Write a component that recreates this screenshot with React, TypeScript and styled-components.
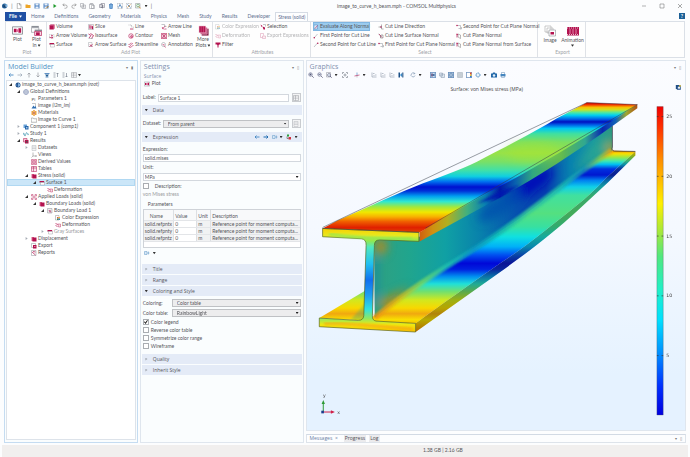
import React from 'react';
import styled, { createGlobalStyle, css } from 'styled-components';

const Global = createGlobalStyle`
  * { box-sizing: border-box; }
  body { margin: 0; background: #fdfdfe; }
  body, button, input, select, table {
    font-family: Lato, "Open Sans", sans-serif;
    font-size: 5px;
    line-height: 7px;
    color: #55555a;
  }
  button { border: 0; background: none; padding: 0; margin: 0; }
  h2, p, ul { margin: 0; padding: 0; list-style: none; font-weight: 400; }
`;

/* ---------- icons ---------- */

const M = '#b3124f';
const B = '#2f6fb3';
const G = '#8b8f96';

const glyphs: Record<string, React.ReactNode> = {
  app: <><circle cx="5" cy="6" r="5" fill="#1f5c94" /><path d="M5 3h6v5H5z" fill="#7fb2dd" /><path d="M3 4l4 1v4l-4-1z" fill="#173f6b" /></>,
  newFile: <path d="M2.500.5h5l2.500 3v8h-7.500zM7 .5v3.500h3" fill="#fff" stroke="#777" />,
  open: <path d="M1 3h4l1 1h5v6H1z" fill="#eda528" />,
  save: <><path d="M1 1h10v10H1z" fill="#4a7fbf" /><path d="M3 1h6v4H3zM3 7h6v4H3z" fill="#e8f0fa" /></>,
  saveAs: <><path d="M1 1h10v10H1z" fill="#4a7fbf" /><path d="M3 1h6v4H3zM3 7h5v4H3z" fill="#e8f0fa" /><path d="M6 11l5-5" stroke="#c98a2a" strokeWidth="2" /></>,
  run: <path d="M3 2l6 4-6 4z" fill="#1f9a2c" />,
  undo: <path d="M4 1L1.500 4 5 6M2 4h5a3 3 0 010 6.500H5" fill="none" stroke="#888" strokeWidth="1.300" />,
  redo: <path d="M8 1l2.500 3L7 6m3-2H5a3 3 0 000 6.500h2" fill="none" stroke="#888" strokeWidth="1.300" />,
  copy: <path d="M1 1h6v7H1zM4 4h7v7H4zM6 6h3M6 8.500h3" fill="#fff" stroke={G} />,
  paste: <path d="M1 2h8v9H1zM3 1h4v2H3zM5 5h6v6H5z" fill="#fff" stroke={G} />,
  dup: <path d="M1 3h6v6H1zM4 1h7v8H4zM5 6h5M7 4v7" fill="#fff" stroke="#667" />,
  trash: <path d="M2 3h8M4 1.500h4M3 3l.5 8h5L9 3" fill="#78aee0" stroke={B} strokeWidth="1.200" />,
  selBox: <><path d="M1 1h10v10H1z" fill="none" stroke={G} strokeDasharray="2 1" /><path d="M3 9l3-6 4 7" fill="none" stroke={B} strokeWidth="1.500" /></>,
  selX: <><path d="M1 1h10v10H1z" fill="none" stroke={G} strokeDasharray="2 1" /><path d="M3 3l6 6" stroke={B} strokeWidth="1.500" /><path d="M9 3L3 9" stroke="#d98a2b" strokeWidth="1.500" /></>,
  find: <><path d="M1 1h9v9H1z" fill="#e7f2e5" stroke={G} /><circle cx="6" cy="5" r="2.500" fill="#fff" stroke="#3d8b47" /><path d="M8 7l3 4" stroke="#d98a2b" strokeWidth="1.500" /></>,
  plot: <><path d="M.5 2h11v8H.5z" fill="#fff" stroke={G} /><path d="M2 4h3v4H2zM7 3.500h3v5H7z" fill={M} /><circle cx="6" cy="6" r="1.500" fill="#e46a96" /></>,
  plotIn: <><path d="M.5 1h8v2h-8z" fill={G} /><path d="M.5 3h8v5h-8z" fill="#fff" stroke={G} strokeWidth=".7" /><path d="M4 5h8v2H4z" fill={G} /><path d="M4 7h7.500v4.500H4z" fill="#f6dbe5" stroke={M} strokeWidth=".7" /><path d="M5.500 8h4v3h-4z" fill={M} /></>,
  volume: <><path d="M1 3l2-2h8v8l-2 2H1z" fill={M} /><path d="M1 3h8v8M9 3l2-2" fill="none" stroke="#e79ab7" strokeWidth=".7" /></>,
  more: <><path d="M4 4h7.500v7.500H4z" fill="#7e0d39" /><path d="M2.500 2.500H10V10H2.500z" fill="#c53b70" stroke="#fff" strokeWidth=".5" /><path d="M1 1h7.500v7.500H1z" fill={M} stroke="#fff" strokeWidth=".5" /><path d="M3.500 1v7.500M6 1v7.500" stroke="#e58baa" strokeWidth=".4" /></>,
  arrowVol: <><path d="M1 3h9v7H1z" fill="none" stroke={G} strokeWidth=".8" strokeDasharray="2 1" /><path d="M1 9h6M5 7l3 2-3 2M4 5h4" fill="none" stroke={M} strokeWidth="1.300" /></>,
  surface: <><path d="M1 2h9l1 3H1z" fill={M} /><path d="M1 5h10v5H3V5" fill="#fff" stroke={G} strokeWidth=".8" /></>,
  slice: <><path d="M1 1h10v10H1z" fill="#f4e4ea" stroke={G} strokeWidth=".8" /><path d="M3 2l2 1v7L3 9zM7 3l3 2v6L7 9z" fill={M} /></>,
  iso: <><path d="M1 2l5 3-4 5M5 1l6 4-4 6" fill="none" stroke={M} strokeWidth="1.500" /><path d="M1 11h9" stroke={G} /></>,
  arrowSurf: <><path d="M1 1h7v8H1z" fill="none" stroke={G} strokeWidth=".8" /><path d="M3 9l6-4M4 5l5 5" stroke={M} strokeWidth="1.400" /></>,
  line: <><path d="M1 2h6v4h4v5" fill="none" stroke={G} strokeDasharray="2 1" /><path d="M4 10h6" stroke={M} strokeWidth="1.500" /></>,
  contour: <><circle cx="6" cy="6" r="4.500" fill="none" stroke={M} strokeWidth="1.200" /><circle cx="7" cy="7" r="2" fill="#e07da0" stroke={M} /></>,
  stream: <path d="M1 9c4 2 4-6 9-6M1 5c3 1 3-3 6-3M3 11c4 0 5-4 8-4" fill="none" stroke={M} strokeWidth="1.200" />,
  arrowLine: <><path d="M1 1h6v4h4" fill="none" stroke={G} /><path d="M2 10l7-6M2 6l4 5M7 10h4" stroke={M} strokeWidth="1.200" /></>,
  mesh: <><path d="M1 1h10v10H1z" fill="#f1ccd9" stroke={M} /><path d="M1 1l10 10M11 1L1 11M6 1v10" stroke={M} /></>,
  annot: <><circle cx="5" cy="5" r="4" fill="#fff" stroke={G} /><path d="M5 7l5 4M3 5h4" stroke={M} /></>,
  colorExp: <><path d="M1 1h7v9H1z" fill="#fff" stroke={G} /><path d="M4 4h3v3H4z" fill="#e3564d" /><path d="M7 4h3v3H7z" fill="#f0c230" /><path d="M4 7h3v3H4z" fill="#3a8f4a" /><path d="M7 7h3v3H7z" fill="#3a79c4" /></>,
  deform: <><path d="M1 3l5 2M1 7l4 2" stroke={M} strokeWidth="1.300" /><path d="M6 4h5v6H7z" fill="#f6dfe7" stroke={M} strokeWidth=".8" /></>,
  filter: <path d="M1 1h10v4H8l-1 2v4H5V7L4 5H1z" fill={M} />,
  selection: <><path d="M1 1l4 3-2 2zM5 5l5 2v4H7z" fill={M} /><path d="M6 1h5v4" fill="none" stroke={G} /></>,
  exportExp: <path d="M1 1h6v4M1 1v8h4M5 6h6v5H5zM7 8h2" fill="none" stroke={M} />,
  evalN: <><path d="M2 2h7v8H2z" fill="#dcecf8" stroke={B} strokeWidth=".8" /><path d="M4 9l5-6" stroke={M} strokeWidth="1.200" /></>,
  firstPt: <><path d="M2 10l7-8" stroke={G} /><circle cx="2.500" cy="9.500" r="1.500" fill={M} /></>,
  secondPt: <><path d="M2 10l7-8" stroke={G} /><circle cx="9.500" cy="2.500" r="1.500" fill={M} /></>,
  cutDir: <><path d="M1 6h6M7 1v9h4" fill="none" stroke="#666" /><path d="M5 4l3 2-3 2z" fill={M} /></>,
  cutSurf: <><path d="M1 2l4 3v4M6 4h4v6H5z" fill="none" stroke="#666" /><path d="M2 2l6 7" stroke={M} strokeWidth="1.200" /></>,
  planePt: <><path d="M2 3h7v6H5M8 10h3V6" fill="none" stroke={G} /><circle cx="2" cy="3" r="1.500" fill={M} /></>,
  cutPlane: <><path d="M4 2l5 2v7L4 8z" fill="none" stroke="#777" /><path d="M1 3h3M2 1v8" stroke={M} strokeWidth="1.400" /></>,
  image: <><path d="M1 1h6v6H1zM3 3h6v5H3z" fill="#fff" stroke="#aaa" strokeWidth=".6" /><path d="M5 5h6.500v6H5z" fill="#fff" stroke={G} strokeWidth=".6" /><path d="M6.500 7h3.500v2.500H6.500z" fill={M} /></>,
  anim: <><path d="M0 2h12v8.500H0z" fill={M} /><path d="M0 3h12M0 9.500h12" stroke="#fff" strokeWidth=".7" strokeDasharray="1 1" /><path d="M3 4v5M6 4v5M9 4v5" stroke="#f0bccd" strokeWidth=".7" /></>,
  left: <path d="M11 6H2M5 3L2 6l3 3" fill="none" stroke="#4387c2" strokeWidth="1.800" />,
  right: <path d="M1 6h9M7 3l3 3-3 3" fill="none" stroke="#9aa7b5" strokeWidth="1.500" />,
  rightBlue: <path d="M1 6h9M7 3l3 3-3 3" fill="none" stroke="#1d6bb0" strokeWidth="2" />,
  up: <path d="M6 11V2M3 5l3-3 3 3" fill="none" stroke={G} strokeWidth="1.300" />,
  down: <path d="M6 1v9M3 7l3 3 3-3" fill="none" stroke={G} strokeWidth="1.300" />,
  eye: <><path d="M1 3h10M3 10h6" stroke={B} strokeWidth="1.500" /><path d="M2 5h8l-4 5z" fill="#1f5c94" /></>,
  collapse: <path d="M1 2h4M1 6h4M1 10h4M9 10V2M7 4l2-2 2 2" fill="none" stroke="#6c7683" strokeWidth="1.200" />,
  expand: <path d="M1 2h4M1 6h4M1 10h4M9 2v8M7 8l2 2 2-2" fill="none" stroke="#6c7683" strokeWidth="1.200" />,
  table: <path d="M1 1h10v10H1zM1 4h10M1 7.500h10M5 1v10" fill="#fff" stroke={G} strokeWidth=".9" />,
  globe: <><circle cx="6" cy="6" r="5" fill="#e6ebf5" stroke="#6f7fa5" /><path d="M1 6h10M6 1c-3 3-3 7 0 10M6 1c3 3 3 7 0 10" fill="none" stroke="#6f7fa5" strokeWidth=".8" /></>,
  root: <><circle cx="6" cy="6" r="5" fill="#1f4f8a" /><path d="M6 2l4 2v4l-4 2z" fill="#82b0dc" /><path d="M2 4l3 1v4L2 8z" fill="#3c6fae" /></>,
  pi: <text x="1" y="9" fontSize="9" fill="#555">Pi</text>,
  picture: <><path d="M2 1h7v8" fill="none" stroke={G} /><path d="M1 11l4-6 2 3 2-2 2 5z" fill={B} /></>,
  materials: <><circle cx="6" cy="6" r="1.800" fill="#b5482b" /><g fill="#e8962a"><circle cx="6" cy="2" r="1.800" /><circle cx="9.500" cy="4" r="1.800" /><circle cx="9.500" cy="8" r="1.800" /><circle cx="6" cy="10" r="1.800" /><circle cx="2.500" cy="8" r="1.800" /><circle cx="2.500" cy="4" r="1.800" /></g></>,
  folder: <path d="M.5 2h4l1 1.500h6v7H.5z" fill="#fff" stroke="#777" />,
  component: <><path d="M1 1h7v7H1z" fill="#6aa3d8" /><path d="M4 4h7v7H4z" fill="#2765a8" /><path d="M6 6h3v3H6z" fill="#9fc6ea" /></>,
  study: <path d="M0 8c1-5 2-5 3 0s2 0 3-3 2-2 3 1 2 1 3-1" fill="none" stroke="#2c8ba8" strokeWidth="1.300" />,
  results: <><path d="M1 1h7v7H1z" fill="#f0c6d5" stroke={M} /><path d="M4 4h7v7H4z" fill={M} /><path d="M6 6h3v3H6z" fill="#555" /></>,
  datasets: <path d="M2 1h8v10H2zM2 4h8M2 7h8" fill="#f3f3f5" stroke="#b5b8bd" />,
  views: <path d="M4 1v7h7M4 8l-3 3M9 6l2 2-2 2" fill="none" stroke="#777" />,
  derived: <path d="M1 1h4v4H1zM7 1h4v4H7zM1 7h4v4H1zM7 7h4v4H7z" fill="#e7a3bb" stroke={M} strokeWidth=".8" />,
  tables: <><path d="M1 1h10v10H1z" fill="#f7e3ea" stroke={M} /><path d="M1 4h10M5 1v10" stroke={M} /></>,
  group: <><path d="M1 2h5v8H1z" fill="#d8628d" /><path d="M3 3h8v8H3z" fill={M} /></>,
  loads: <path d="M1 1h3v3H1zM8 1h3v3H8zM1 8h3v3H1zM8 8h3v3H8zM5 5h2v2H5z" fill="none" stroke={M} strokeWidth=".9" />,
  bload: <><path d="M1 1h9v9H1z" fill="#eee" stroke={G} /><path d="M3 4h4l2 5H5z" fill="#c4799a" /></>,
  export: <><path d="M1 1h8v8H1z" fill="#fff" stroke={G} /><path d="M4 4h7v7H4z" fill={M} /><path d="M6 7h3" stroke="#fff" /></>,
  reports: <><path d="M1 1h9v10H1z" fill="#fff" stroke={G} /><path d="M2 4l7 6M4 3l5 1" stroke={M} strokeWidth="1.400" /></>,
  zoomIn: <><circle cx="5" cy="5" r="3.500" fill="#e7f0fa" stroke="#446" /><path d="M8 8l3.500 3.500M3 5h4M5 3v4" stroke="#446" strokeWidth="1.300" /></>,
  zoomOut: <><circle cx="5" cy="5" r="3.500" fill="#e7f0fa" stroke="#446" /><path d="M8 8l3.500 3.500M3 5h4" stroke="#446" strokeWidth="1.300" /></>,
  zoomBox: <><path d="M1 1h8v9H1z" fill="none" stroke={G} /><circle cx="6" cy="6" r="3" fill="#e7f0fa" stroke="#446" /><path d="M8 8l3.500 3.500" stroke="#446" strokeWidth="1.300" /></>,
  extents: <path d="M1 4V1h3M8 1h3v3M11 8v3H8M4 11H1V8M6 3v6M3 6h6" fill="none" stroke="#6e7580" strokeWidth="1.200" />,
  axes: <><path d="M6 1v6" stroke="#4a86c5" strokeWidth="1.300" /><path d="M6 7l5-1M6 7l-5 1" stroke={M} strokeWidth="1.200" /><path d="M6 7v4" stroke="#888" /></>,
  xy: <path d="M2 1v9h9M4 3h3M8 6h3M5 7h2" fill="none" stroke="#8a96a6" strokeWidth="1.200" />,
  camera2: <><path d="M1 1h3v10H1z" fill="#1a4f86" /><path d="M4 6l4-4v8z" fill="#3d8dc9" /><path d="M8 1h3v10H8z" fill="#5b7ea5" /></>,
  rotate: <path d="M9 3a4 4 0 10 1 4M8 1l2 2-3 1" fill="none" stroke="#7a93b0" strokeWidth="1.300" />,
  light: <><path d="M.5.5h11v11H.5z" fill="#cfe3f6" stroke="#3d6ea8" strokeWidth="1.500" /><path d="M2 3h4v6H2z" fill="#7b6f96" /><path d="M5 6l4-3v6z" fill="#1c4e86" /></>,
  transp: <path d="M1 2h6v6H1zM4 4h7v7H4z" fill="#dfe9f2" stroke="#8193a8" />,
  wire: <><path d="M.5.5h11v11H.5z" fill="#e4eff9" stroke="#2a5f9e" strokeWidth="1.500" /><path d="M1 6h10M6 1v10M3 3h6v6H3z" fill="none" stroke="#4472a5" /></>,
  grid: <path d="M1 1h10v10H1zM1 4h10M1 8h10M4 1v10M8 1v10" fill="#e9edf1" stroke="#9aa6b3" />,
  legend: <><path d="M.5.5h11v11H.5z" fill="#fff" stroke="#3d6ea8" strokeWidth="1.500" /><path d="M8 1h3v4H8z" fill="#e24a2e" /><path d="M8 5h3v3H8z" fill="#e9c22c" /><path d="M8 8h3v3H8z" fill="#3177d0" /></>,
  ring: <circle cx="6" cy="6" r="4" fill="#e8f2fb" stroke="#3d7fb8" strokeWidth="1.800" strokeDasharray="3 1" />,
  photo: <><path d="M0 3h3l1-2h4l1 2h3v8H0z" fill="#2167a8" /><circle cx="6" cy="7" r="2.500" fill="#e6f1fb" /></>,
  print: <><path d="M3 1h6v4H3z" fill="#fff" stroke="#5c86b0" /><path d="M1 4h10v5H1z" fill="#4486c0" /><path d="M3 8h6v3H3z" fill="#dbe9f5" stroke="#5c86b0" strokeWidth=".8" /></>,
  insert: <path d="M1 3h5v6H1zM6 6h5M9 3v6" fill="#d8e8f6" stroke="#5b94c6" />,
  unitSet: <><path d="M2 1h4v4H2z" fill="#2a9f3c" /><path d="M5 6h5v5H5z" fill="#d1303e" /><path d="M2 5v4h3" stroke="#333" fill="none" /></>,
};

const Svg = styled.svg<{ $size: number }>`
  display: block;
  flex: none;
  width: ${p => p.$size}px;
  height: ${p => p.$size}px;
`;
const Icon = ({ name, size = 6 }: { name: string; size?: number }) => (
  <Svg $size={size} viewBox="0 0 12 12" aria-hidden="true">{glyphs[name]}</Svg>
);

const Caret = styled.span<{ $dir?: 'down' | 'right' | 'open' }>`
  flex: none;
  width: 3px;
  height: 3px;
  background: #333;
  clip-path: polygon(0 20%, 100% 20%, 50% 90%);
  ${p => p.$dir === 'right' && css`background: #a5abb3; clip-path: polygon(20% 0, 90% 50%, 20% 100%);`}
  ${p => p.$dir === 'open' && css`clip-path: polygon(100% 0, 100% 100%, 0 100%);`}
`;

/* ---------- shell ---------- */

const Shell = styled.div`
  display: flex;
  flex-direction: column;
  min-height: 100vh;
  background: #fcfdfe;
`;
const TitleBar = styled.header`
  display: flex;
  align-items: center;
  height: 12px;
  padding: 0 7px 0 2px;
`;
const QuickBar = styled.div`
  display: flex;
  align-items: center;
  justify-content: space-between;
  width: 150px;
`;
const DocTitle = styled.div`
  flex: 1;
  text-align: center;
`;
const WindowButtons = styled.div`
  display: flex;
  gap: 12px;
`;
const IconButton = styled.button<{ $w?: number }>`
  display: flex;
  align-items: center;
  justify-content: center;
  flex: none;
  min-width: ${p => p.$w ?? 6}px;
  height: 7px;
`;

const Tabs = styled.nav`
  display: flex;
  align-items: stretch;
  height: 9px;
  padding: 0 5px;
`;
const TabButton = styled.button<{ $kind?: 'file' | 'active' }>`
  display: flex;
  align-items: center;
  padding: 0 5px;
  color: #5f7090;
  ${p => p.$kind === 'file' && css`background: #1f4fa3; color: #fff; font-weight: 700; gap: 2px; padding: 0 4px;
    ${Caret} { background: #fff; }`}
  ${p => p.$kind === 'active' && css`border: 1px solid #d5dbe4; border-bottom: 0; padding: 0 2px; background: #fdfeff;`}
`;
const Help = styled.button`
  width: 6px;
  height: 6px;
  margin: 1px 0 0 auto;
  background: #1c6096;
  color: #fff;
  font-weight: 700;
  line-height: 6px;
`;

const Ribbon = styled.section`
  display: flex;
  margin: 0 5px 2px;
  border: 1px solid #dbe0e7;
  background: #fefefe;
`;
const RibbonGroup = styled.div<{ $cols: string }>`
  display: grid;
  grid-template-columns: ${p => p.$cols};
  grid-template-rows: repeat(3, 9px) 6px;
  grid-auto-flow: column;
  padding: 0 0 2px 2px;
  border-right: 1px solid #dfe2e7;
`;
const GroupLabel = styled.span`
  grid-row: 4;
  grid-column: 1 / -1;
  text-align: center;
  line-height: 6px;
  color: #a0a3a8;
`;
const Command = styled.button<{ $on?: boolean; $off?: boolean }>`
  display: flex;
  align-items: center;
  justify-self: start;
  gap: 1px;
  white-space: nowrap;
  ${p => p.$on && css`background: #9bcbee; outline: 1px solid #7fb6e2; outline-offset: -1px;`}
  ${p => p.$off && css`opacity: 0.45;`}
`;
const BigCommand = styled.button`
  grid-row: 1 / 4;
  display: flex;
  flex-direction: column;
  align-items: center;
  justify-content: flex-start;
  gap: 1px;
  padding-top: 3px;
  line-height: 5px;
`;
const Inline = styled.span`
  display: flex;
  align-items: center;
  gap: 1px;
`;

const Workspace = styled.main`
  flex: 1;
  display: grid;
  grid-template-columns: minmax(120px, 134fr) minmax(150px, 164fr) minmax(300px, 381fr);
  gap: 2px;
  padding: 0 4px 0 4px;
`;
const Panel = styled.section<{ $blue?: boolean }>`
  display: flex;
  flex-direction: column;
  min-width: 0;
  border: 1px solid ${p => (p.$blue ? '#c5dcf1' : '#dfe6ee')};
  background: #fafdfe;
`;
const PanelHead = styled.div`
  display: flex;
  align-items: center;
  padding: 1px 4px 0 3px;
`;
const PanelTitle = styled.h2<{ $blue?: boolean }>`
  flex: 1;
  font: 7px/10px "Open Sans", sans-serif;
  color: ${p => (p.$blue ? '#4f92c4' : '#8190ae')};
`;
const Corner = styled.button`
  display: flex;
  gap: 3px;
  font-size: 4px;
  color: #777;
`;
const Tools = styled.div`
  display: flex;
  align-items: center;
  height: 8px;
  padding-bottom: 2px;
`;
const ToolGroup = styled.div<{ $gap: number }>`
  display: flex;
  align-items: center;
  margin-left: ${p => p.$gap}px;
`;

/* ---------- tree ---------- */

const Tree = styled.ul`
  flex: 1;
  margin: 0 1px 2px;
  border: 1px solid #dde3ea;
  background: #fff;
`;
const TreeRow = styled.li<{ $level: number; $on?: boolean; $muted?: boolean }>`
  display: grid;
  grid-template-columns: 6px 7px auto;
  align-items: center;
  justify-content: start;
  height: 7px;
  padding-left: ${p => 2 + p.$level * 8}px;
  white-space: nowrap;
  ${p => p.$on && css`background: #cbe6f8; box-shadow: inset 0 0 0 1px #b0d8f2;`}
  ${p => p.$muted && css`color: #96989c;`}
`;

type Node = [number, string, string, string?, ('open' | 'right')?];
const nodes: Node[] = [
  [0, 'root', 'image_to_curve_h_beam.mph', '(root)', 'open'],
  [1, 'globe', 'Global Definitions', '', 'open'],
  [2, 'pi', 'Parameters 1'],
  [2, 'picture', 'image', '(i2m_im)'],
  [2, 'materials', 'Materials'],
  [2, 'folder', 'Image to Curve 1'],
  [1, 'component', 'Component 1', '(comp1)', 'right'],
  [1, 'study', 'Study 1', '', 'right'],
  [1, 'results', 'Results', '', 'open'],
  [2, 'datasets', 'Datasets', '', 'right'],
  [2, 'views', 'Views'],
  [2, 'derived', 'Derived Values'],
  [2, 'tables', 'Tables'],
  [2, 'group', 'Stress (solid)', '', 'open'],
  [3, 'surface', 'Surface 1', '', 'open'],
  [4, 'deform', 'Deformation'],
  [2, 'loads', 'Applied Loads (solid)', '', 'open'],
  [3, 'group', 'Boundary Loads (solid)', '', 'open'],
  [4, 'bload', 'Boundary Load 1', '', 'open'],
  [5, 'colorExp', 'Color Expression'],
  [5, 'deform', 'Deformation'],
  [4, 'surface', 'Gray Surfaces', '', 'right'],
  [2, 'group', 'Displacement', '', 'right'],
  [2, 'export', 'Export'],
  [2, 'reports', 'Reports'],
];

/* ---------- settings ---------- */

const Subtitle = styled.p`
  padding-left: 3px;
  font: 5px/8px "Open Sans", sans-serif;
  color: #8190ae;
`;
const PlotButton = styled.button`
  display: flex;
  align-items: center;
  align-self: flex-start;
  gap: 2px;
  margin: 0 0 6px 3px;
`;
const Section = styled.button`
  display: flex;
  align-items: center;
  gap: 5px;
  height: 10px;
  flex: none;
  margin: 0 1px 1px 1px;
  padding: 0 3px;
  background: #e4ebf7;
  font: 5px/10px "Open Sans", sans-serif;
  text-align: left;
`;
const SectionBar = styled.div`
  display: flex;
  flex: none;
  background: #e4ebf7;
  margin: 0 1px 1px 1px;
  padding-right: 4px;
  align-items: center;
  ${Section} { flex: 1; margin: 0; }
`;
const Field = styled.div<{ $label: number; $gap?: number }>`
  display: grid;
  grid-template-columns: ${p => p.$label}px minmax(0, 1fr) auto;
  align-items: center;
  padding: 0 2px;
  margin-bottom: ${p => p.$gap ?? 3}px;
`;
const TextInput = styled.input`
  min-width: 0;
  width: 100%;
  height: 8px;
  padding: 0 1px;
  border: 1px solid #d3d8de;
  background: #fff;
`;
const SelectBox = styled.span`
  position: relative;
  display: block;
  &::after {
    content: '';
    position: absolute;
    right: 2px;
    top: 3px;
    width: 3px;
    height: 2px;
    background: #222;
    clip-path: polygon(0 0, 100% 0, 50% 100%);
    pointer-events: none;
  }
`;
const Select = styled.select<{ $plain?: boolean }>`
  display: block;
  appearance: none;
  width: 100%;
  height: 8px;
  padding: 0 ${p => (p.$plain ? 1 : 4)}px;
  border: 1px solid ${p => (p.$plain ? '#d3d8de' : '#bfc1c4')};
  border-radius: 0;
  background: ${p => (p.$plain ? '#fff' : '#ededee')};
`;
const SideButton = styled(IconButton)`
  width: 9px;
  height: 9px;
  margin-left: 3px;
  border: 1px solid #c9ccd0;
  background: #f3f4f5;
`;
const Stack = styled.div`
  display: flex;
  flex-direction: column;
  gap: 1px;
  padding: 3px 2px 2px;
  label { display: flex; align-items: center; }
`;
const UnitLabel = styled.label`
  padding: 1px 0;
`;
const Note = styled.p`
  color: #9a9ca0;
`;
const Params = styled.fieldset`
  min-width: 0;
  margin: 1px 2px 2px;
  padding: 0;
  border: 0;
  legend { padding: 0 5px 1px; }
`;
const ParamBox = styled.div`
  min-height: 39px;
  border: 1px solid #cfd3d8;
  background: #fff;
`;
const ParamTable = styled.table`
  width: 100%;
  table-layout: fixed;
  border-collapse: collapse;
  th, td {
    height: 7px;
    padding: 0 0 0 1px;
    border-right: 1px solid #dcdfe3;
    border-bottom: 1px solid #e3e5e8;
    font-weight: 400;
    text-align: left;
    line-height: 6px;
    white-space: nowrap;
  }
  th:last-child, td:last-child { border-right: 0; }
  th { height: 10px; padding-top: 2px; background: #f8f9fa; }
  th:first-child { padding-left: 6px; }
  td:nth-child(odd), td:last-child { background: #f1f2f3; }
`;
const Col = styled.col<{ $w?: number }>`
  ${p => p.$w && css`width: ${p.$w}px;`}
`;
const ParamTools = styled(Tools)`
  margin-bottom: 6px;
`;
const Check = styled.label`
  display: flex;
  align-items: center;
  gap: 2px;
  height: 8px;
`;
const Box = styled.input.attrs({ type: 'checkbox' })<{ $gap?: number }>`
  appearance: none;
  flex: none;
  width: 6px;
  height: 6px;
  margin: 0 ${p => p.$gap ?? 0}px 0 0;
  border: 1px solid #a9adb2;
  background: #fff;
  &:checked::after {
    content: '';
    display: block;
    width: 4px;
    height: 4px;
    background: #111;
    clip-path: polygon(0 45%, 20% 35%, 40% 65%, 85% 0, 100% 10%, 45% 100%);
  }
`;
const Group = styled.div<{ $top: number; $bottom: number }>`
  padding: ${p => p.$top}px 0 ${p => p.$bottom}px;
  > label { padding-left: 2px; }
`;

/* ---------- graphics ---------- */

const RightColumn = styled.div`
  display: flex;
  flex-direction: column;
  gap: 3px;
  min-width: 0;
`;
const GraphicsPanel = styled(Panel)`
  flex: 1;
  background: linear-gradient(#fbfcff, #f5f9ff 45%, #e5f2ff 85%);
`;
const Scene = styled.svg`
  display: block;
  flex: 1;
  width: 100%;
  min-height: 0;
`;
const BottomTabs = styled.div`
  display: flex;
  align-items: flex-end;
  gap: 3px;
  height: 9px;
  border: 1px solid #dde3ea;
  border-top-color: #d2dae4;
  padding-right: 3px;
`;
const BottomTab = styled.button<{ $on?: boolean }>`
  height: 7px;
  padding: 0 ${p => (p.$on ? 3 : 1)}px;
  font-family: "Open Sans", sans-serif;
  background: ${p => (p.$on ? '#fdfeff' : '#ebebed')};
  color: ${p => (p.$on ? '#6b7fa6' : '#4c4c50')};
`;
const Spacer = styled.span`
  flex: 1;
`;
const StatusBar = styled.footer`
  height: 12px;
  margin: 2px 2px 0;
  padding: 2px 0 0 61%;
  background: #f1efee;
`;

const topStops: [number, string][] = [
  [36, '#c40000'], [42, '#f03000'], [50, '#f8c000'], [57, '#d0e020'], [66, '#50e8a0'], [74, '#00d0f0'], [86, '#0060e8'],
  [94, '#0010c0'], [103, '#0060e8'], [114, '#00c8f0'], [130, '#40e0a0'], [155, '#7ce060'], [188, '#98e248'], [215, '#78e068'],
  [240, '#40e0a8'], [258, '#10d0e0'], [274, '#0070f0'], [290, '#0010d0'], [302, '#0030d8'], [318, '#00a0f0'], [334, '#30e8d0'],
  [350, '#a0e840'], [366, '#f0e800'], [380, '#f8b000'], [394, '#f06000'], [412, '#e02000'], [427, '#e04000'],
];
const bottomStops: [number, string][] = [
  [182, '#f0a000'], [190, '#f8e000'], [200, '#a0e840'], [212, '#40e8b0'], [222, '#00c0f0'], [236, '#0030e0'], [254, '#0018d0'],
  [270, '#0080f0'], [290, '#10d0e8'], [315, '#40e0a0'], [370, '#54e080'], [410, '#38e0a0'], [440, '#10e0e0'], [470, '#00b0f8'],
  [495, '#0050f0'], [520, '#0008d8'], [538, '#0020e0'], [560, '#0090f0'], [582, '#20e0d8'], [605, '#70e070'], [630, '#d0e820'],
  [655, '#f8d800'], [672, '#f0a810'], [690, '#f8e000'], [727, '#f08000'],
];
const legendStops: [number, string][] = [
  [48, '#f00000'], [110, '#ff3000'], [210, '#ff9000'], [340, '#fff000'], [430, '#a0e840'], [500, '#50e880'], [600, '#20f0c8'],
  [690, '#00e0ff'], [790, '#0090ff'], [890, '#0030ff'], [977, '#0000e0'],
];
const Ramp = ({ id, stops }: { id: string; stops: [number, string][] }) => {
  const a = stops[0][0];
  const b = stops[stops.length - 1][0];
  return (
    <linearGradient id={id} gradientUnits="userSpaceOnUse" x1="0" x2="0" y1={a} y2={b}>
      {stops.map(([y, c]) => <stop key={y} offset={(y - a) / (b - a)} stopColor={c} />)}
    </linearGradient>
  );
};

const junction = 'M222 684C300 618 390 560 470 510S640 400 720 338S880 214 936 180';

const Beam = () => (
  <g strokeLinejoin="round">
    {/* rear part of the lower flange */}
    <path d="M55 685L193 603V692Z" fill="url(#low)" />
    <path d="M150 690L193 640V692Z" fill="#00a0a0" opacity=".25" filter="url(#soft)" />
    {/* lower flange, top face and edge */}
    <path d="M205 694L222 676C300 612 390 556 470 504S640 396 720 334S880 210 936 180L1007 183L920 262C890 295 860 322 830 346C760 402 680 468 600 520C510 582 430 640 345 701Z" fill="url(#low)" />
    <path d="M1007 183L920 262C890 295 860 322 830 346C760 402 680 468 600 520C510 582 430 640 345 701V727C430 666 515 606 600 546C690 482 760 428 830 364L925 276L1007 195Z" fill="url(#low)" />
    <path d="M1007 183L920 262C890 295 860 322 830 346C760 402 680 468 600 520C510 582 430 640 345 701V727C430 666 515 606 600 546C690 482 760 428 830 364L925 276L1007 195Z" fill="#203000" opacity=".3" />
    {/* web side */}
    <clipPath id="webClip"><path d="M220 440L357 440L600 300L938 90V182C880 212 800 275 720 338S550 456 470 510S300 618 222 684Z" /></clipPath>
    <g clipPath="url(#webClip)">
      <path d="M215 90H945V700H215Z" fill="url(#web)" />
      <g filter="url(#wide)">
        <ellipse cx="690" cy="284" rx="80" ry="26" transform="rotate(-34 690 284)" fill="#0010b8" />
        <ellipse cx="600" cy="345" rx="80" ry="26" transform="rotate(-34 600 345)" fill="#064fae" opacity=".8" />
        <path d="M226 640L330 590L260 660Z" fill="#c08a10" />
        <ellipse cx="240" cy="470" rx="18" ry="24" fill="#b08a20" />
        <path d="M820 240L930 190V130L880 160Z" fill="#30a890" opacity=".7" />
        <path d="M218 500H228V640H218Z" fill="#0878c0" />
        <ellipse cx="932" cy="172" rx="14" ry="16" fill="#c0a020" />
      </g>
    </g>
    <path d={junction} fill="none" stroke="url(#joint)" strokeWidth="16" filter="url(#soft)" opacity=".85" />
    <path d="M938 106V170Q934 181 944 182L1007 183" fill="none" stroke="#223" strokeWidth="2" />
    {/* upper flange edge, its hidden side tucked under the deck */}
    <path d="M357 427L600 270L860 120L1013 42V53L936 108C820 190 720 255 600 322L357 454Z" fill="url(#edge)" />
    {/* upper flange top */}
    <path d="M65 415L110 391C190 356 260 323 340 290C410 262 470 243 530 214C600 178 690 132 770 84L861 36L1013 42C960 76 920 104 876 128C790 180 690 240 600 288C520 330 440 378 357 427Z" fill="url(#top)" />
    <ellipse cx="700" cy="186" rx="80" ry="28" fill="#a8e430" opacity=".5" filter="url(#wide)" />
    <path d="M530 340L600 302L660 284L600 320Z" fill="#0018b0" opacity=".8" filter="url(#soft)" />
    {/* front face of the section */}
    <path d="M65 415L355 427V454L236 449Q221 450 221 466L215 678Q214 692 226 694L345 701V727L55 711V685L172 692Q188 692 189 678L196 466Q197 448 182 446L65 440Z" fill="url(#front)" stroke="#54601a" strokeWidth="2" />
    <path d="M85 432C150 442 270 446 335 446" fill="none" stroke="#80e860" strokeWidth="8" filter="url(#soft)" opacity=".7" />
    <path d="M70 702C150 700 260 712 335 718" fill="none" stroke="#f8a010" strokeWidth="7" filter="url(#soft)" opacity=".8" />
    {/* undeformed outline */}
    <path d="M65 412L861 36L1013 42M1013 42L375 414M65 415L355 427" fill="none" stroke="#333a44" strokeWidth="1.500" />
  </g>
);

const Viewport = () => (
  <Scene viewBox="18 -30 1140 1050" role="img" aria-label="Surface: von Mises stress (MPa)">
    <defs>
      <Ramp id="top" stops={topStops} />
      <Ramp id="low" stops={bottomStops} />
      <Ramp id="bar" stops={legendStops} />
      <linearGradient id="web" gradientUnits="userSpaceOnUse" x1="220" x2="938" y1="0" y2="0">
        <stop offset="0" stopColor="#30a080" /><stop offset=".15" stopColor="#20a58e" /><stop offset=".3" stopColor="#10a0a4" />
        <stop offset=".45" stopColor="#0880ac" /><stop offset=".6" stopColor="#0650b0" /><stop offset=".72" stopColor="#0640b0" />
        <stop offset=".82" stopColor="#0880b0" /><stop offset=".92" stopColor="#1898a0" /><stop offset="1" stopColor="#309a80" />
      </linearGradient>
      <linearGradient id="joint" gradientUnits="userSpaceOnUse" x1="222" x2="936" y1="0" y2="0">
        <stop offset="0" stopColor="#f09010" /><stop offset=".1" stopColor="#d8b818" /><stop offset=".2" stopColor="#70d868" />
        <stop offset=".3" stopColor="#20c0b0" /><stop offset=".42" stopColor="#0898c0" /><stop offset=".52" stopColor="#10b0b0" />
        <stop offset=".65" stopColor="#38c898" /><stop offset=".8" stopColor="#18b0b0" /><stop offset=".88" stopColor="#1890b8" />
        <stop offset=".95" stopColor="#80c850" /><stop offset="1" stopColor="#f0a010" />
      </linearGradient>
      <linearGradient id="edge" gradientUnits="userSpaceOnUse" x1="357" x2="1013" y1="0" y2="0">
        <stop offset="0" stopColor="#d06010" /><stop offset=".06" stopColor="#d09010" /><stop offset=".13" stopColor="#b0b020" />
        <stop offset=".22" stopColor="#40b080" /><stop offset=".3" stopColor="#0880b0" /><stop offset=".37" stopColor="#0018a8" />
        <stop offset=".44" stopColor="#0860b0" /><stop offset=".52" stopColor="#30a880" /><stop offset=".65" stopColor="#60b850" />
        <stop offset=".76" stopColor="#30a890" /><stop offset=".84" stopColor="#0828b0" /><stop offset=".9" stopColor="#1060b8" />
        <stop offset=".95" stopColor="#a0a830" /><stop offset="1" stopColor="#b05010" />
      </linearGradient>
      <linearGradient id="front" gradientUnits="userSpaceOnUse" x1="0" x2="0" y1="415" y2="727">
        <stop offset="0" stopColor="#f8d000" /><stop offset=".07" stopColor="#e8e820" /><stop offset=".12" stopColor="#90e850" />
        <stop offset=".18" stopColor="#50e8c0" /><stop offset=".34" stopColor="#20c0f0" /><stop offset=".5" stopColor="#1070f0" />
        <stop offset=".65" stopColor="#20a0f0" /><stop offset=".78" stopColor="#30e0e0" /><stop offset=".87" stopColor="#90e860" />
        <stop offset=".93" stopColor="#f0e810" /><stop offset="1" stopColor="#f8c000" />
      </linearGradient>
      <filter id="soft" x="-20%" y="-20%" width="140%" height="140%"><feGaussianBlur stdDeviation="4" /></filter>
      <filter id="wide" x="-50%" y="-50%" width="200%" height="200%"><feGaussianBlur stdDeviation="14" /></filter>
    </defs>
    <g fontFamily="DejaVu Sans, sans-serif" fontSize="14" fill="#444">
      <text x="450" y="0" fontFamily="Open Sans, sans-serif" fontSize="15">Surface: von Mises stress (MPa)</text>
      <Beam />
      <path d="M1072 48h19v929h-19z" fill="url(#bar)" stroke="#555" strokeWidth="1" />
      {[25, 20, 15, 10, 5].map((v, i) => (
        <g key={v}>
          <path d={`M1072 ${78 + i * 180}h5M1086 ${78 + i * 180}h5`} stroke="#333" strokeWidth="2" />
          <text x="1100" y={83 + i * 180}>{v}</text>
        </g>
      ))}
      <path d="M67 966V942" stroke="#2c9a34" strokeWidth="3" /><path d="M62 944L67 932L72 944Z" fill="#2c9a34" />
      <path d="M68 968H92" stroke="#d0204a" strokeWidth="3" /><path d="M90 963L102 968L90 973Z" fill="#d0204a" />
      <path d="M61 964h8v8h-8z" fill="#1b3c8c" />
      <text x="66" y="924">y</text><text x="109" y="973">x</text>
      <g transform="translate(1129 -19)"><path d="M0 2h11l4 3v11H4L0 12z" fill="#1e4d85" /><path d="M6 7h7v6H6z" fill="#e8eefa" /><path d="M10 2h5v5h-5z" fill="#c8b23c" /></g>
    </g>
  </Scene>
);

/* ---------- data ---------- */

const quick = ['newFile', 'open', 'save', 'saveAs', 'run', 'undo', 'redo', 'copy', 'paste', 'dup', 'trash', 'selBox', 'selX', 'find'];
const tabNames = ['Home', 'Definitions', 'Geometry', 'Materials', 'Physics', 'Mesh', 'Study', 'Results', 'Developer'];
const addPlot: [string, string][] = [
  ['volume', 'Volume'], ['arrowVol', 'Arrow Volume'], ['surface', 'Surface'],
  ['slice', 'Slice'], ['iso', 'Isosurface'], ['arrowSurf', 'Arrow Surface'],
  ['line', 'Line'], ['contour', 'Contour'], ['stream', 'Streamline'],
  ['arrowLine', 'Arrow Line'], ['mesh', 'Mesh'], ['annot', 'Annotation'],
];
const selects: [string, string][] = [
  ['evalN', 'Evaluate Along Normal'], ['firstPt', 'First Point for Cut Line'], ['secondPt', 'Second Point for Cut Line'],
  ['cutDir', 'Cut Line Direction'], ['cutSurf', 'Cut Line Surface Normal'], ['planePt', 'First Point for Cut Plane Normal'],
  ['planePt', 'Second Point for Cut Plane Normal'], ['cutPlane', 'Cut Plane Normal'], ['cutPlane', 'Cut Plane Normal from Surface'],
];
const attrs: [string, string, boolean][] = [
  ['colorExp', 'Color Expression', true], ['deform', 'Deformation', true], ['filter', 'Filter', false],
  ['selection', 'Selection', false], ['exportExp', 'Export Expressions', true],
];
const graphicTools: [number, string[], boolean][] = [
  [0, ['zoomIn', 'zoomOut', 'zoomBox'], true],
  [2, ['extents'], false],
  [3, ['axes'], true],
  [3, ['xy', 'xy', 'xy', 'camera2'], false],
  [3, ['rotate'], true],
  [6, ['light', 'transp', 'wire', 'grid', 'legend', 'ring'], true],
  [2, ['photo', 'print'], false],
];

export default function App() {
  return (
    <Shell>
      <Global />
      <TitleBar>
        <QuickBar>
          <Icon name="app" />
          <span>|</span>
          {quick.map(n => <IconButton key={n} aria-label={n}><Icon name={n} /></IconButton>)}
          <Caret />
          <span>|</span>
        </QuickBar>
        <DocTitle>image_to_curve_h_beam.mph - COMSOL Multiphysics</DocTitle>
        <WindowButtons>
          <IconButton aria-label="Minimize"><Svg $size={6} viewBox="0 0 12 12"><path d="M2 6h8" stroke="#666" /></Svg></IconButton>
          <IconButton aria-label="Maximize"><Svg $size={6} viewBox="0 0 12 12"><path d="M2 2h8v8H2z" fill="none" stroke="#666" /></Svg></IconButton>
          <IconButton aria-label="Close"><Svg $size={6} viewBox="0 0 12 12"><path d="M2 2l8 8M10 2l-8 8" stroke="#555" /></Svg></IconButton>
        </WindowButtons>
      </TitleBar>
      <Tabs>
        <TabButton $kind="file">File <Caret /></TabButton>
        {tabNames.map(t => <TabButton key={t}>{t}</TabButton>)}
        <TabButton $kind="active">Stress (solid)</TabButton>
        <Help aria-label="Help">?</Help>
      </Tabs>
      <Ribbon>
        <RibbonGroup $cols="19px 19px">
          <BigCommand><Icon name="plot" size={11} />Plot</BigCommand>
          <BigCommand><Icon name="plotIn" size={11} />Plot<Inline>In <Caret /></Inline></BigCommand>
          <GroupLabel>Plot</GroupLabel>
        </RibbonGroup>
        <RibbonGroup $cols="39px 40px 33px 33px 18px">
          {addPlot.map(([i, t]) => <Command key={t}><Icon name={i} />{t}</Command>)}
          <BigCommand><Icon name="more" size={11} />More<Inline>Plots <Caret /></Inline></BigCommand>
          <GroupLabel>Add Plot</GroupLabel>
        </RibbonGroup>
        <RibbonGroup $cols="45px 50px">
          {attrs.map(([i, t, off]) => <Command key={t} $off={off} disabled={off}><Icon name={i} />{t}</Command>)}
          <GroupLabel>Attributes</GroupLabel>
        </RibbonGroup>
        <RibbonGroup $cols="65px 78px 81px">
          {selects.map(([i, t], n) => <Command key={t} $on={n === 0}><Icon name={i} />{t}</Command>)}
          <GroupLabel>Select</GroupLabel>
        </RibbonGroup>
        <RibbonGroup $cols="20px 25px">
          <BigCommand><Icon name="image" size={12} />Image</BigCommand>
          <BigCommand><Icon name="anim" size={12} />Animation<Caret /></BigCommand>
          <GroupLabel>Export</GroupLabel>
        </RibbonGroup>
      </Ribbon>

      <Workspace>
        <Panel $blue>
          <PanelHead>
            <PanelTitle $blue>Model Builder</PanelTitle>
            <Corner aria-label="Panel options"><span>▾</span><span>▮</span></Corner>
          </PanelHead>
          <Tools>
            <ToolGroup $gap={1}>
              {['left', 'right', 'up', 'down', 'eye', 'collapse', 'expand', 'table'].map(n => (
                <IconButton key={n} $w={9} aria-label={n}><Icon name={n} /></IconButton>
              ))}
              <Caret />
            </ToolGroup>
          </Tools>
          <Tree>
            {nodes.map(([level, icon, text, tag, dir], i) => (
              <TreeRow key={i} $level={level} $on={i === 14} $muted={i === 21}>
                {dir ? <Caret $dir={dir} /> : <span />}
                <Icon name={icon} />
                <span>{text} {tag && <i>{tag}</i>}</span>
              </TreeRow>
            ))}
          </Tree>
        </Panel>

        <Panel>
          <PanelHead>
            <PanelTitle>Settings</PanelTitle>
            <Corner aria-label="Panel options"><span>▾</span><span>▯</span></Corner>
          </PanelHead>
          <Subtitle>Surface</Subtitle>
          <PlotButton><Icon name="plot" />Plot</PlotButton>
          <Field $label={15}>
            <label htmlFor="label">Label:</label>
            <TextInput id="label" defaultValue="Surface 1" />
            <SideButton aria-label="Edit label"><Icon name="table" /></SideButton>
          </Field>
          <Section><Caret />Data</Section>
          <Group $top={3} $bottom={4}>
            <Field $label={20} $gap={0}>
              <label htmlFor="dataset">Dataset:</label>
              <SelectBox><Select id="dataset"><option>From parent</option></Select></SelectBox>
              <SideButton aria-label="Go to dataset"><Icon name="datasets" /></SideButton>
            </Field>
          </Group>
          <SectionBar>
            <Section><Caret />Expression</Section>
            <IconButton $w={9} aria-label="Previous"><Icon name="left" /></IconButton>
            <IconButton $w={9} aria-label="Next"><Icon name="rightBlue" /></IconButton>
            <IconButton $w={9} aria-label="Insert"><Icon name="insert" /></IconButton>
            <Caret />
            <IconButton $w={12} aria-label="Replace"><Icon name="unitSet" /></IconButton>
            <Caret />
          </SectionBar>
          <Stack>
            <label htmlFor="expr">Expression:</label>
            <TextInput id="expr" defaultValue="solid.mises" />
            <UnitLabel htmlFor="unit">Unit:</UnitLabel>
            <SelectBox><Select id="unit" $plain><option>MPa</option></Select></SelectBox>
            <Check><Box $gap={4} />Description:</Check>
            <Note>von Mises stress</Note>
          </Stack>
          <Params>
            <legend>Parameters</legend>
            <ParamBox>
              <ParamTable>
                <colgroup><Col $w={30} /><Col $w={23} /><Col $w={14} /><Col /></colgroup>
                <thead><tr><th>Name</th><th>Value</th><th>Unit</th><th>Description</th></tr></thead>
                <tbody>
                  {['solid.refpntx', 'solid.refpnty', 'solid.refpntz'].map(n => (
                    <tr key={n}><td>{n}</td><td>0</td><td>m</td><td>Reference point for moment computa...</td></tr>
                  ))}
                </tbody>
              </ParamTable>
            </ParamBox>
          </Params>
          <ParamTools>
            <IconButton $w={12} aria-label="Insert parameter"><Icon name="insert" /></IconButton>
            <Caret />
          </ParamTools>
          <Section><Caret $dir="right" />Title</Section>
          <Section><Caret $dir="right" />Range</Section>
          <Section><Caret />Coloring and Style</Section>
          <Group $top={2} $bottom={4}>
            <Field $label={29} $gap={2}>
              <label htmlFor="coloring">Coloring:</label>
              <SelectBox><Select id="coloring"><option>Color table</option></Select></SelectBox>
            </Field>
            <Field $label={29} $gap={1}>
              <label htmlFor="ctable">Color table:</label>
              <SelectBox><Select id="ctable"><option>RainbowLight</option></Select></SelectBox>
            </Field>
            <Check><Box defaultChecked />Color legend</Check>
            <Check><Box />Reverse color table</Check>
            <Check><Box />Symmetrize color range</Check>
            <Check><Box />Wireframe</Check>
          </Group>
          <Section><Caret $dir="right" />Quality</Section>
          <Section><Caret $dir="right" />Inherit Style</Section>
        </Panel>

        <RightColumn>
          <GraphicsPanel>
            <PanelHead>
              <PanelTitle>Graphics</PanelTitle>
              <Corner aria-label="Panel options"><span>▾</span><span>▯</span></Corner>
            </PanelHead>
            <Tools>
              {graphicTools.map(([gap, icons, menu], i) => (
                <ToolGroup key={i} $gap={gap}>
                  {icons.map((n, k) => <IconButton key={k} $w={9} aria-label={n}><Icon name={n} /></IconButton>)}
                  {menu && <IconButton $w={5} aria-label="More"><Caret /></IconButton>}
                </ToolGroup>
              ))}
            </Tools>
            <Viewport />
          </GraphicsPanel>
          <BottomTabs>
            <BottomTab $on>Messages &nbsp;×</BottomTab>
            <BottomTab>Progress</BottomTab>
            <BottomTab>Log</BottomTab>
            <Spacer />
            <Corner aria-label="Panel options"><span>▾</span><span>▯</span></Corner>
          </BottomTabs>
        </RightColumn>
      </Workspace>
      <StatusBar>1.38 GB | 2.16 GB</StatusBar>
    </Shell>
  );
}
